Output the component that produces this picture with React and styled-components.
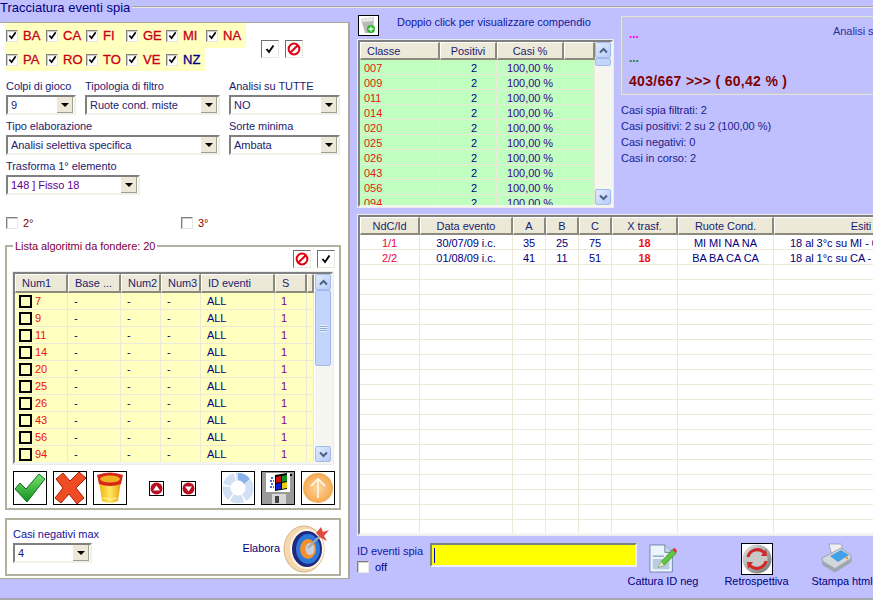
import React from 'react';
import styled, { createGlobalStyle } from 'styled-components';

const font = '"Liberation Sans", Arial, sans-serif';
const lavender = '#c0c0ff';
const navy = '#000080';
const xpFace = '#ece9d8';

const GlobalStyle = createGlobalStyle`
  * {
    box-sizing: border-box;
  }

  body {
    margin: 0;
    font-family: ${font};
    font-size: 11px;
    color: ${navy};
    background: ${lavender};
    letter-spacing: -0.05px;
  }
`;

const Page = styled.div`
  width: 873px;
  height: 600px;
  overflow: hidden;
  display: flex;
  flex-direction: column;
  background: ${lavender};
  border-bottom: 2px solid #a8a8b0;
`;

const TitleRow = styled.div`
  height: 15px;
  flex: none;
  display: flex;
  align-items: center;
  gap: 2px;
`;

const Title = styled.div`
  font-size: 13px;
  line-height: 15px;
  letter-spacing: 0;
  color: ${navy};
  white-space: nowrap;
`;

const TitleRule = styled.div`
  flex: 1;
  height: 2px;
  margin-top: -2px;
  background: #a8a8a8;
  border-bottom: 1px solid #e8e8e8;
`;

const Main = styled.div`
  display: flex;
  flex: none;
`;

const LeftPanel = styled.section`
  width: 350px;
  height: 557px;
  margin-top: 7px;
  flex: none;
  background: #fff;
  border-top: 1px solid #aca899;
  border-right: 2px solid #aca899;
  border-bottom: 1px solid #aca899;
`;

const RuoteTop = styled.div`
  display: flex;
  align-items: flex-start;
`;

const RuoteBlock = styled.div`
  margin-left: 5px;
  width: 241px;
`;

const RuoteRow = styled.div`
  display: flex;
  align-items: center;
  width: ${p => p.$w}px;
  height: ${p => p.$h}px;
  background: #ffffc0;
`;

const Ruota = styled.label`
  width: 40px;
  flex: none;
  display: flex;
  align-items: center;
  gap: 5px;
  padding-left: 1px;
  font-size: 13px;
  letter-spacing: 0;
  -webkit-text-stroke: 0.3px currentColor;
  color: ${p => (p.$nz ? navy : '#c80018')};
`;

const Box = styled.span`
  width: 12px;
  height: 12px;
  flex: none;
  display: inline-flex;
  align-items: center;
  justify-content: center;
  background: ${p => p.$bg || '#fff'};
  border: 1px solid;
  border-color: #808080 #e8e8e8 #e8e8e8 #808080;
  box-shadow: inset 1px 1px 0 #d0d0c8;
`;

const TopTools = styled.div`
  display: flex;
  gap: 6px;
  margin: 17px 0 0 15px;
`;

const SquareBtn = styled.button`
  width: 18px;
  height: 18px;
  padding: 0;
  display: flex;
  align-items: center;
  justify-content: center;
  background: #fff;
  border: 1px solid;
  border-color: #707070 #e8e8e0 #e8e8e0 #707070;
`;

const FieldRow = styled.div`
  display: flex;
  gap: 9px;
  margin-left: 6px;
  margin-bottom: 4px;
  margin-top: ${p => p.$top || 0}px;
`;

const Field = styled.div`
  width: ${p => p.$w}px;
`;

const Label = styled.div`
  height: 16px;
  line-height: 15px;
  color: ${p => p.$color || '#1c1c70'};
  white-space: nowrap;
`;

const Combo = styled.div`
  height: 20px;
  display: flex;
  align-items: center;
  justify-content: space-between;
  padding: 0 1px 0 3px;
  background: #fff;
  border: 2px solid;
  border-color: #808080 #f0f0e8 #f0f0e8 #808080;
  color: ${p => p.$color || '#1c1c70'};
  white-space: nowrap;
`;

const ComboArrow = styled.span`
  width: 16px;
  height: 16px;
  flex: none;
  display: flex;
  align-items: center;
  justify-content: center;
  background: ${xpFace};
  border-right: 1px solid #a0a090;
  border-bottom: 1px solid #a0a090;

  &::after {
    content: '';
    border-left: 4px solid transparent;
    border-right: 4px solid transparent;
    border-top: 4px solid #000;
  }
`;

const ExtraRow = styled.div`
  display: flex;
  margin: 22px 0 0 6px;
  height: 12px;
`;

const Extra = styled.div`
  width: 175px;
  flex: none;
  display: flex;
  align-items: center;
  gap: 5px;
  color: #800000;
`;

const Group = styled.fieldset`
  width: 336px;
  height: 271px;
  margin: 10px 0 0 5px;
  padding: 0;
  border: 2px solid #b4b0a0;
  min-width: 0;
`;

const Legend = styled.legend`
  margin-left: 6px;
  padding: 0 2px;
  line-height: 14px;
  color: #800040;
`;

const GroupTools = styled.div`
  display: flex;
  justify-content: flex-end;
  gap: 6px;
  padding-right: 4px;
  margin-top: -3px;
  margin-bottom: 4px;
`;

const GridFrame = styled.div`
  display: flex;
  width: ${p => p.$w}px;
  height: ${p => p.$h}px;
  margin-left: ${p => p.$left || 0}px;
  background: #fff;
  border: 2px solid;
  border-color: #808080 #f4f4f0 #f4f4f0 #808080;
  box-shadow: 0 0 0 1px #ecece8;
  overflow: hidden;
  flex: none;
`;

const GridBody = styled.div`
  flex: 1;
  min-width: 0;
  overflow: hidden;
`;

const GridRow = styled.div`
  display: grid;
  grid-template-columns: ${p => p.$cols};
  height: ${p => p.$h}px;
  background: ${p => p.$bg || '#fff'};
`;

const HeadCell = styled.div`
  display: flex;
  align-items: center;
  justify-content: ${p => (p.$left ? 'flex-start' : 'center')};
  padding-left: ${p => (p.$left ? 6 : 0)}px;
  background: ${xpFace};
  border-top: 1px solid #fff;
  border-left: 1px solid #fff;
  border-right: 2px solid #8c8a7c;
  border-bottom: 2px solid #8c8a7c;
  color: #1c1c70;
  white-space: nowrap;
  overflow: hidden;
`;

const Cell = styled.div`
  display: flex;
  align-items: center;
  justify-content: ${p => (p.$align === 'left' ? 'flex-start' : 'center')};
  gap: 3px;
  padding-top: ${p => (p.$tall ? 0 : 1)}px;
  padding-left: ${p => p.$pad || 0}px;
  border-right: 1px solid ${xpFace};
  border-bottom: 1px solid ${xpFace};
  color: ${p => p.$color || navy};
  font-weight: ${p => (p.$bold ? 'bold' : 'normal')};
  white-space: nowrap;
  overflow: hidden;
`;

const ListCheck = styled.span`
  width: 13px;
  height: 13px;
  flex: none;
  border: 2px solid #000;
  background: #ffffc0;
`;

const Scroll = styled.div`
  width: 16px;
  flex: none;
  display: flex;
  flex-direction: column;
  background: #f6f6f0;
  margin-left: ${p => p.$gap || 0}px;
`;

const ScrollBtn = styled.div`
  height: 16px;
  flex: none;
  display: flex;
  align-items: center;
  justify-content: center;
  background: linear-gradient(135deg, #e2ebfe, #b6cbf8);
  border: 1px solid #a4bcea;
  border-radius: 2px;
  color: #4d6185;
`;

const Thumb = styled.div`
  height: ${p => p.$h}px;
  flex: none;
  display: flex;
  align-items: center;
  justify-content: center;
  background: #c3d5fd;
  border: 1px solid #a4bcea;
  border-radius: 2px;
`;

const Grip = styled.span`
  width: 7px;
  height: 7px;
  background: repeating-linear-gradient(#eef4fe 0 1px, #8ca6d8 1px 2px);
`;

const ScrollGap = styled.div`
  flex: 1;
`;

const IconBar = styled.div`
  display: flex;
  align-items: center;
  padding: 7px 5px 0 6px;
`;

const IconBtn = styled.button`
  width: ${p => p.$w || 34}px;
  height: 34px;
  padding: 0;
  display: flex;
  align-items: center;
  justify-content: center;
  margin-left: ${p => p.$left || 0}px;
  background: #fff;
  border: 1px solid #000;
`;

const TinyBtn = styled.button`
  width: 15px;
  height: 15px;
  padding: 0;
  display: flex;
  margin-left: ${p => p.$left}px;
  border: 1px solid #000;
  background: #fff;
`;

const NegPanel = styled.div`
  width: 336px;
  height: 58px;
  margin: 8px 0 0 5px;
  padding: 7px 8px 0 6px;
  display: flex;
  justify-content: space-between;
  border: 2px solid #b4b0a0;
`;

const ElaboraWrap = styled.div`
  display: flex;
  align-items: center;
  gap: 3px;
  margin-top: -6px;
`;

const Elabora = styled.span`
  color: ${navy};
`;

const RightCol = styled.section`
  flex: 1;
  min-width: 0;
  padding-left: 8px;
`;

const TopRight = styled.div`
  display: flex;
  gap: 8px;
  height: 200px;
`;

const CompCol = styled.div`
  width: 255px;
  flex: none;
`;

const CompHead = styled.div`
  display: flex;
  align-items: flex-start;
  gap: 18px;
  height: 25px;
  color: #1018a0;
`;

const CompIcon = styled.div`
  width: 21px;
  height: 21px;
  background: #fff;
  border: 1px solid #000;
  display: flex;
  overflow: hidden;
`;

const CompText = styled.span`
  line-height: 14px;
`;

const SummaryCol = styled.div`
  width: 320px;
  flex: none;
  padding-top: 1px;
`;

const SummaryBox = styled.div`
  height: 79px;
  padding: 6px 6px 0 7px;
  border: 1px solid #e0e0e8;
  box-shadow: inset 0 0 0 1px #c8c8d0;
`;

const SummaryTop = styled.div`
  display: flex;
  height: 24px;
`;

const Dots = styled.div`
  flex: none;
  font-weight: bold;
  font-size: 12px;
  line-height: 22px;
  height: 24px;
  width: 204px;
  color: ${p => p.$color};
`;

const AnalisiText = styled.div`
  line-height: 16px;
  color: #30309a;
  white-space: nowrap;
`;

const Score = styled.div`
  font-size: 14px;
  font-weight: bold;
  line-height: 18px;
  margin-top: 1px;
  letter-spacing: 0.3px;
  color: #800000;
`;

const Stats = styled.div`
  margin-top: 7px;
`;

const StatLine = styled.div`
  line-height: 16px;
  color: #20208a;
`;

const BottomBar = styled.div`
  display: flex;
  align-items: flex-start;
  padding-top: 8px;
`;

const IdCol = styled.div`
  width: 73px;
  margin-left: -1px;
  flex: none;
  color: #1018a0;
`;

const IdTitle = styled.div`
  line-height: 14px;
  padding-top: 1px;
  height: 18px;
  white-space: nowrap;
`;

const OffRow = styled.div`
  display: flex;
  align-items: center;
  gap: 6px;
  color: ${navy};
`;

const IdInput = styled.div`
  width: 207px;
  height: 24px;
  flex: none;
  display: flex;
  align-items: center;
  padding-left: 2px;
  background: #ffff00;
  border: 2px solid;
  border-color: #808080 #f0f0f8 #f0f0f8 #808080;

  &::before {
    content: '';
    width: 1px;
    height: 15px;
    background: #0000c0;
  }
`;

const ToolItem = styled.div`
  width: ${p => p.$w}px;
  flex: none;
  margin-left: ${p => p.$left}px;
  display: flex;
  flex-direction: column;
  align-items: center;
`;

const ToolIcon = styled.div`
  height: 32px;
  display: flex;
  align-items: flex-start;
  justify-content: center;
  padding-right: ${p => p.$shift || 0}px;
`;

const ToolLabel = styled.div`
  line-height: 13px;
  white-space: nowrap;
  color: ${navy};
`;

const CheckMark = ({ size = 10 }) => (
  <svg width={size} height={size} viewBox="0 0 10 10">
    <path d="M1.5 5 L4 8 L8.5 1.5" fill="none" stroke="#000" strokeWidth="1.9" />
  </svg>
);

const BanIcon = () => (
  <svg width="14" height="14" viewBox="0 0 14 14">
    <circle cx="7" cy="7" r="5.4" fill="#fff" stroke="#e00010" strokeWidth="2" />
    <path d="M3.2 10.8 L10.8 3.2" stroke="#e00010" strokeWidth="2" />
  </svg>
);

const Arrow = ({ down }) => (
  <svg width="9" height="7" viewBox="0 0 9 7">
    <path d={down ? 'M1 1.5 L4.5 5 L8 1.5' : 'M1 5.5 L4.5 2 L8 5.5'} fill="none" stroke="#4d6185" strokeWidth="2" />
  </svg>
);

const GreenCheckIcon = () => (
  <svg width="32" height="32" viewBox="0 0 32 32">
    <defs>
      <linearGradient id="greenFill" x1="0" y1="0" x2="0" y2="1">
        <stop offset="0" stopColor="#7ce070" />
        <stop offset="1" stopColor="#109020" />
      </linearGradient>
    </defs>
    <path d="M1 17 L6 11 L12 17 L25 2 L31 7 L13 30 Z" fill="url(#greenFill)" stroke="#0c6e18" strokeWidth="1" strokeLinejoin="round" />
  </svg>
);

const RedXIcon = () => (
  <svg width="32" height="32" viewBox="0 0 32 32">
    <path d="M2 7 L9 1 L16 9 L25 0 L32 6 L22 16 L30 26 L23 32 L15 22 L7 31 L1 26 L9 16 Z" fill="#f04c24" stroke="#a81c08" strokeWidth="1" strokeLinejoin="round" />
  </svg>
);

const BucketIcon = () => (
  <svg width="32" height="32" viewBox="0 0 32 32">
    <defs>
      <linearGradient id="bucketFill" x1="0" y1="0" x2="1" y2="0">
        <stop offset="0" stopColor="#f0b010" />
        <stop offset="0.5" stopColor="#ffe860" />
        <stop offset="1" stopColor="#e8a010" />
      </linearGradient>
    </defs>
    <path d="M5 9 L8 29 Q16 33 24 29 L27 9 Z" fill="url(#bucketFill)" />
    <path d="M3 3 Q16 -2 29 3 L27 12 Q16 16 5 12 Z" fill="#d82818" />
    <ellipse cx="16" cy="7" rx="10" ry="3.5" fill="#f0b020" />
    <path d="M9 26 Q16 29 23 26" fill="none" stroke="#fff8a0" strokeWidth="1" />
  </svg>
);

const TinyArrow = ({ down }) => (
  <svg width="13" height="13" viewBox="0 0 13 13">
    <circle cx="6.5" cy="6.5" r="6" fill="#b80c20" />
    <path d={down ? 'M3 4.5 H10 L6.5 9.5 Z' : 'M3 8.5 H10 L6.5 3.5 Z'} fill="#fff" />
  </svg>
);

const RingIcon = () => (
  <svg width="32" height="32" viewBox="0 0 32 32">
    <circle cx="16" cy="16" r="11.5" fill="none" stroke="#d2e0f6" strokeWidth="8" strokeDasharray="11.5 1.5" />
    <path d="M16 1 A15 15 0 0 1 28 7 L22 12 A8 8 0 0 0 16 8 Z" fill="#8cb0e8" />
  </svg>
);

const FloppyIcon = () => (
  <svg width="32" height="32" viewBox="0 0 32 32">
    <rect x="0" y="0" width="32" height="32" fill="#9a9a9a" />
    <rect x="4" y="1" width="24" height="19" fill="#fff" />
    <rect x="28" y="2" width="2" height="2" fill="#000" />
    <rect x="10" y="22" width="14" height="10" fill="#d8d8d8" />
    <rect x="13" y="24" width="4" height="7" fill="#444" />
    <path d="M13 3 L25 1 V17 L13 19 Z" fill="#000" />
    <path d="M14 5 L19 4 V10 L14 11 Z" fill="#d01010" />
    <path d="M20 4 L25 3 V9 L20 10 Z" fill="#109020" />
    <path d="M14 12 L19 11 V17 L14 18 Z" fill="#1020d0" />
    <path d="M20 11 L25 10 V16 L20 17 Z" fill="#e8d010" />
    <path d="M9 6 H12 M8 9 H12 M9 12 H12 M8 15 H12" stroke="#1040c0" strokeWidth="1.4" strokeDasharray="2 1" />
  </svg>
);

const OrangeUpIcon = () => (
  <svg width="32" height="32" viewBox="0 0 32 32">
    <defs>
      <radialGradient id="orangeFill" cx="0.5" cy="0.5" r="0.5">
        <stop offset="0" stopColor="#fcd8a0" />
        <stop offset="1" stopColor="#f6a850" />
      </radialGradient>
    </defs>
    <circle cx="16" cy="16" r="15" fill="url(#orangeFill)" />
    <path d="M16 26 V7 M9 14 L16 7 L23 14" fill="none" stroke="#fff4e0" strokeWidth="1.8" />
  </svg>
);

const TargetIcon = () => (
  <svg width="48" height="50" viewBox="0 0 48 50">
    <ellipse cx="21" cy="26" rx="20" ry="23" fill="#f4d8b0" stroke="#d8b080" />
    <ellipse cx="24" cy="26" rx="17" ry="20" fill="#fff4e4" />
    <ellipse cx="24" cy="26" rx="15" ry="18" fill="#202880" />
    <ellipse cx="25" cy="26" rx="12" ry="15" fill="#2c78d8" />
    <ellipse cx="25" cy="26" rx="8" ry="10" fill="#f09030" />
    <ellipse cx="27" cy="26" rx="4.5" ry="6" fill="#c8d0e0" />
    <path d="M25 25 L38 12" stroke="#a0a8b0" strokeWidth="2" />
    <path d="M33 10 L38 4 L40 9 L46 7 L41 13 L44 18 L38 15 Z" fill="#e04840" />
  </svg>
);

const RecycleIcon = () => (
  <svg width="19" height="19" viewBox="0 0 19 19">
    <path d="M2 3 L15 1 L14 17 H6 Z" fill="#b8bcb8" />
    <path d="M2 3 L15 1 L14 5 L4 6 Z" fill="#e4e8e4" />
    <circle cx="12" cy="13" r="4" fill="#30b030" />
    <path d="M12 10.5 V15.5 M9.5 13 H14.5" stroke="#d8ffd8" strokeWidth="1.4" />
  </svg>
);

const DocPencilIcon = () => (
  <svg width="28" height="31" viewBox="0 0 30 31">
    <path d="M1 1 H17 L25 9 V30 H1 Z" fill="#eef4fc" stroke="#6884a8" />
    <path d="M17 1 V9 H25" fill="#c8d8ec" stroke="#6884a8" />
    <rect x="4" y="16" width="18" height="11" fill="#b8cce4" />
    <path d="M4 13 H16" stroke="#8ca4c4" strokeWidth="1.5" />
    <path d="M10 25 L13 19 L25 6 L29 10 L16 23 Z" fill="#60c840" stroke="#388020" strokeWidth="0.7" />
    <path d="M25 6 L27 4 L30 7 L29 10 Z" fill="#d83838" />
    <path d="M10 25 L13 19 L16 23 Z" fill="#f4e0c0" />
  </svg>
);

const RetroFrame = styled.div`
  width: 32px;
  height: 32px;
  display: flex;
  align-items: center;
  justify-content: center;
  background: #fff;
  border: 1px solid #000;
`;

const RetroIcon = () => (
  <RetroFrame>
    <svg width="30" height="30" viewBox="0 0 30 30">
      <defs>
        <linearGradient id="silverFill" x1="0" y1="0" x2="1" y2="1">
          <stop offset="0" stopColor="#e8e8e8" />
          <stop offset="1" stopColor="#707070" />
        </linearGradient>
      </defs>
      <circle cx="15" cy="15" r="14.5" fill="url(#silverFill)" />
      <circle cx="15" cy="15" r="10.5" fill="#c8c8c8" />
      <path d="M6 13 A9.5 9.5 0 0 1 22 8.5" fill="none" stroke="#d02828" strokeWidth="3" />
      <path d="M24 17 A9.5 9.5 0 0 1 8 21.5" fill="none" stroke="#d02828" strokeWidth="3" />
      <path d="M19 12 L25 12 L24 5 Z M11 18 L5 18 L6 25 Z" fill="#d02828" />
    </svg>
  </RetroFrame>
);

const PrinterIcon = () => (
  <svg width="31" height="30" viewBox="0 0 31 30">
    <path d="M8 1 L20 1 L23 10 L11 13 Z" fill="#f0f0f4" stroke="#808898" strokeWidth="0.6" />
    <path d="M1 15 L20 5 L30 12 V19 L14 29 L2 22 Z" fill="#d4d8dc" stroke="#788088" strokeWidth="0.6" />
    <path d="M9 13 L20 7 L28 12 L17 19 Z" fill="#40a0e8" />
    <path d="M2 18 L14 25 L30 15 V19 L14 29 L2 22 Z" fill="#a0a8b0" />
    <circle cx="26" cy="15" r="1.2" fill="#f09030" />
  </svg>
);

const listCols = '53px 53px 40px 40px 74px 32px 1fr';
const classCols = '80px 57px 67px 1fr';
const eventCols = '60px 93px 33px 33px 33px 66px 96px 175px';

const ruoteTop = ['BA', 'CA', 'FI', 'GE', 'MI', 'NA'];
const ruoteBottom = ['PA', 'RO', 'TO', 'VE', 'NZ'];
const algoritmi = ['7', '9', '11', '14', '20', '25', '26', '43', '56', '94'];
const classi = ['007', '009', '011', '014', '020', '025', '026', '043', '056', '094'];
const eventi = [
  ['1/1', '30/07/09 i.c.', '35', '25', '75', '18', 'MI MI NA NA', '18 al 3°c su MI - 0'],
  ['2/2', '01/08/09 i.c.', '41', '11', '51', '18', 'BA BA CA CA', '18 al 1°c su CA -'],
];
const eventRows = Array.from({ length: 20 }, (_, i) => eventi[i] || Array(8).fill(''));

function Select({ value, color }) {
  return (
    <Combo $color={color}>
      {value}
      <ComboArrow />
    </Combo>
  );
}

function Scrollbar({ thumb, gap }) {
  return (
    <Scroll $gap={gap}>
      <ScrollBtn><Arrow /></ScrollBtn>
      <Thumb $h={thumb}>{thumb > 20 && <Grip />}</Thumb>
      <ScrollGap />
      <ScrollBtn><Arrow down /></ScrollBtn>
    </Scroll>
  );
}

function App() {
  return (
    <Page>
      <GlobalStyle />
      <TitleRow>
        <Title>Tracciatura eventi spia</Title>
        <TitleRule />
      </TitleRow>
      <Main>
        <LeftPanel>
          <RuoteTop>
            <RuoteBlock>
              <RuoteRow $w={241} $h={25}>
                {ruoteTop.map(r => (
                  <Ruota key={r}><Box><CheckMark size={9} /></Box>{r}</Ruota>
                ))}
              </RuoteRow>
              <RuoteRow $w={200} $h={23}>
                {ruoteBottom.map(r => (
                  <Ruota key={r} $nz={r === 'NZ'}><Box><CheckMark size={9} /></Box>{r}</Ruota>
                ))}
              </RuoteRow>
            </RuoteBlock>
            <TopTools>
              <SquareBtn><CheckMark /></SquareBtn>
              <SquareBtn><BanIcon /></SquareBtn>
            </TopTools>
          </RuoteTop>

          <FieldRow $top={8}>
            <Field $w={70}>
              <Label>Colpi di gioco</Label>
              <Select value="9" />
            </Field>
            <Field $w={135}>
              <Label>Tipologia di filtro</Label>
              <Select value="Ruote cond. miste" />
            </Field>
            <Field $w={111}>
              <Label>Analisi su TUTTE</Label>
              <Select value="NO" />
            </Field>
          </FieldRow>
          <FieldRow>
            <Field $w={214}>
              <Label>Tipo elaborazione</Label>
              <Select value="Analisi selettiva specifica" />
            </Field>
            <Field $w={111}>
              <Label>Sorte minima</Label>
              <Select value="Ambata" />
            </Field>
          </FieldRow>
          <FieldRow>
            <Field $w={134}>
              <Label>Trasforma 1° elemento</Label>
              <Select value="148 ] Fisso 18" color="#600090" />
            </Field>
          </FieldRow>

          <ExtraRow>
            <Extra><Box />2°</Extra>
            <Extra><Box />3°</Extra>
          </ExtraRow>

          <Group>
            <Legend>Lista algoritmi da fondere: 20</Legend>
            <GroupTools>
              <SquareBtn><BanIcon /></SquareBtn>
              <SquareBtn><CheckMark /></SquareBtn>
            </GroupTools>
            <GridFrame $w={320} $h={192} $left={6}>
              <GridBody>
                <GridRow $cols={listCols} $h={19}>
                  <HeadCell $left>Num1</HeadCell>
                  <HeadCell $left>Base ...</HeadCell>
                  <HeadCell $left>Num2</HeadCell>
                  <HeadCell $left>Num3</HeadCell>
                  <HeadCell $left>ID eventi</HeadCell>
                  <HeadCell $left>S</HeadCell>
                  <HeadCell />
                </GridRow>
                {algoritmi.map(n => (
                  <GridRow key={n} $cols={listCols} $h={17} $bg="#ffffc0">
                    <Cell $tall $align="left" $pad={4} $color="#f01010"><ListCheck />{n}</Cell>
                    <Cell $tall $align="left" $pad={6}>-</Cell>
                    <Cell $tall $align="left" $pad={6}>-</Cell>
                    <Cell $tall $align="left" $pad={6}>-</Cell>
                    <Cell $tall $align="left" $pad={6}>ALL</Cell>
                    <Cell $tall $align="left" $pad={6} $color="#800090">1</Cell>
                    <Cell $tall />
                  </GridRow>
                ))}
              </GridBody>
              <Scrollbar thumb={76} gap={1} />
            </GridFrame>
            <IconBar>
              <IconBtn><GreenCheckIcon /></IconBtn>
              <IconBtn $left={6}><RedXIcon /></IconBtn>
              <IconBtn $left={6}><BucketIcon /></IconBtn>
              <TinyBtn $left={22}><TinyArrow /></TinyBtn>
              <TinyBtn $left={17}><TinyArrow down /></TinyBtn>
              <IconBtn $left={25}><RingIcon /></IconBtn>
              <IconBtn $left={6}><FloppyIcon /></IconBtn>
              <IconBtn $left={6}><OrangeUpIcon /></IconBtn>
            </IconBar>
          </Group>

          <NegPanel>
            <Field $w={79}>
              <Label $color="#20109a">Casi negativi max</Label>
              <Select value="4" />
            </Field>
            <ElaboraWrap>
              <Elabora>Elabora</Elabora>
              <TargetIcon />
            </ElaboraWrap>
          </NegPanel>
        </LeftPanel>

        <RightCol>
          <TopRight>
            <CompCol>
              <CompHead>
                <CompIcon><RecycleIcon /></CompIcon>
                <CompText>Doppio click per visualizzare compendio</CompText>
              </CompHead>
              <GridFrame $w={255} $h={167}>
                <GridBody>
                  <GridRow $cols={classCols} $h={18}>
                    <HeadCell $left>Classe</HeadCell>
                    <HeadCell>Positivi</HeadCell>
                    <HeadCell>Casi %</HeadCell>
                    <HeadCell />
                  </GridRow>
                  {classi.map(c => (
                    <GridRow key={c} $cols={classCols} $h={15} $bg="#c0ffc0">
                      <Cell $align="left" $pad={4} $color="#f01010">{c}</Cell>
                      <Cell $align="left" $pad={31}>2</Cell>
                      <Cell $color="#400090">100,00 %</Cell>
                      <Cell />
                    </GridRow>
                  ))}
                </GridBody>
                <Scrollbar thumb={8} />
              </GridFrame>
            </CompCol>
            <SummaryCol>
              <SummaryBox>
                <SummaryTop>
                  <Dots $color="#ff00e0">...</Dots>
                  <AnalisiText>Analisi selettiva specifica</AnalisiText>
                </SummaryTop>
                <Dots $color="#208040">...</Dots>
                <Score>403/667 &gt;&gt;&gt; ( 60,42 % )</Score>
              </SummaryBox>
              <Stats>
                <StatLine>Casi spia filtrati: 2</StatLine>
                <StatLine>Casi positivi: 2 su 2 (100,00 %)</StatLine>
                <StatLine>Casi negativi: 0</StatLine>
                <StatLine>Casi in corso: 2</StatLine>
              </Stats>
            </SummaryCol>
          </TopRight>

          <GridFrame $w={560} $h={320}>
            <GridBody>
              <GridRow $cols={eventCols} $h={18}>
                <HeadCell>NdC/Id</HeadCell>
                <HeadCell>Data evento</HeadCell>
                <HeadCell>A</HeadCell>
                <HeadCell>B</HeadCell>
                <HeadCell>C</HeadCell>
                <HeadCell>X trasf.</HeadCell>
                <HeadCell>Ruote Cond.</HeadCell>
                <HeadCell>Esiti</HeadCell>
              </GridRow>
              {eventRows.map((row, i) => (
                <GridRow key={i} $cols={eventCols} $h={15}>
                  <Cell $color="#f00040">{row[0]}</Cell>
                  <Cell>{row[1]}</Cell>
                  <Cell>{row[2]}</Cell>
                  <Cell>{row[3]}</Cell>
                  <Cell>{row[4]}</Cell>
                  <Cell $color="#f01010" $bold>{row[5]}</Cell>
                  <Cell>{row[6]}</Cell>
                  <Cell $align="left" $pad={16}>{row[7]}</Cell>
                </GridRow>
              ))}
            </GridBody>
          </GridFrame>

          <BottomBar>
            <IdCol>
              <IdTitle>ID eventi spia</IdTitle>
              <OffRow><Box />off</OffRow>
            </IdCol>
            <IdInput />
            <ToolItem $w={68} $left={-8}>
              <ToolIcon><DocPencilIcon /></ToolIcon>
              <ToolLabel>Cattura ID neg</ToolLabel>
            </ToolItem>
            <ToolItem $w={63} $left={28}>
              <ToolIcon><RetroIcon /></ToolIcon>
              <ToolLabel>Retrospettiva</ToolLabel>
            </ToolItem>
            <ToolItem $w={58} $left={25}>
              <ToolIcon $shift={12}><PrinterIcon /></ToolIcon>
              <ToolLabel>Stampa html</ToolLabel>
            </ToolItem>
          </BottomBar>
        </RightCol>
      </Main>
    </Page>
  );
}

export default App;
